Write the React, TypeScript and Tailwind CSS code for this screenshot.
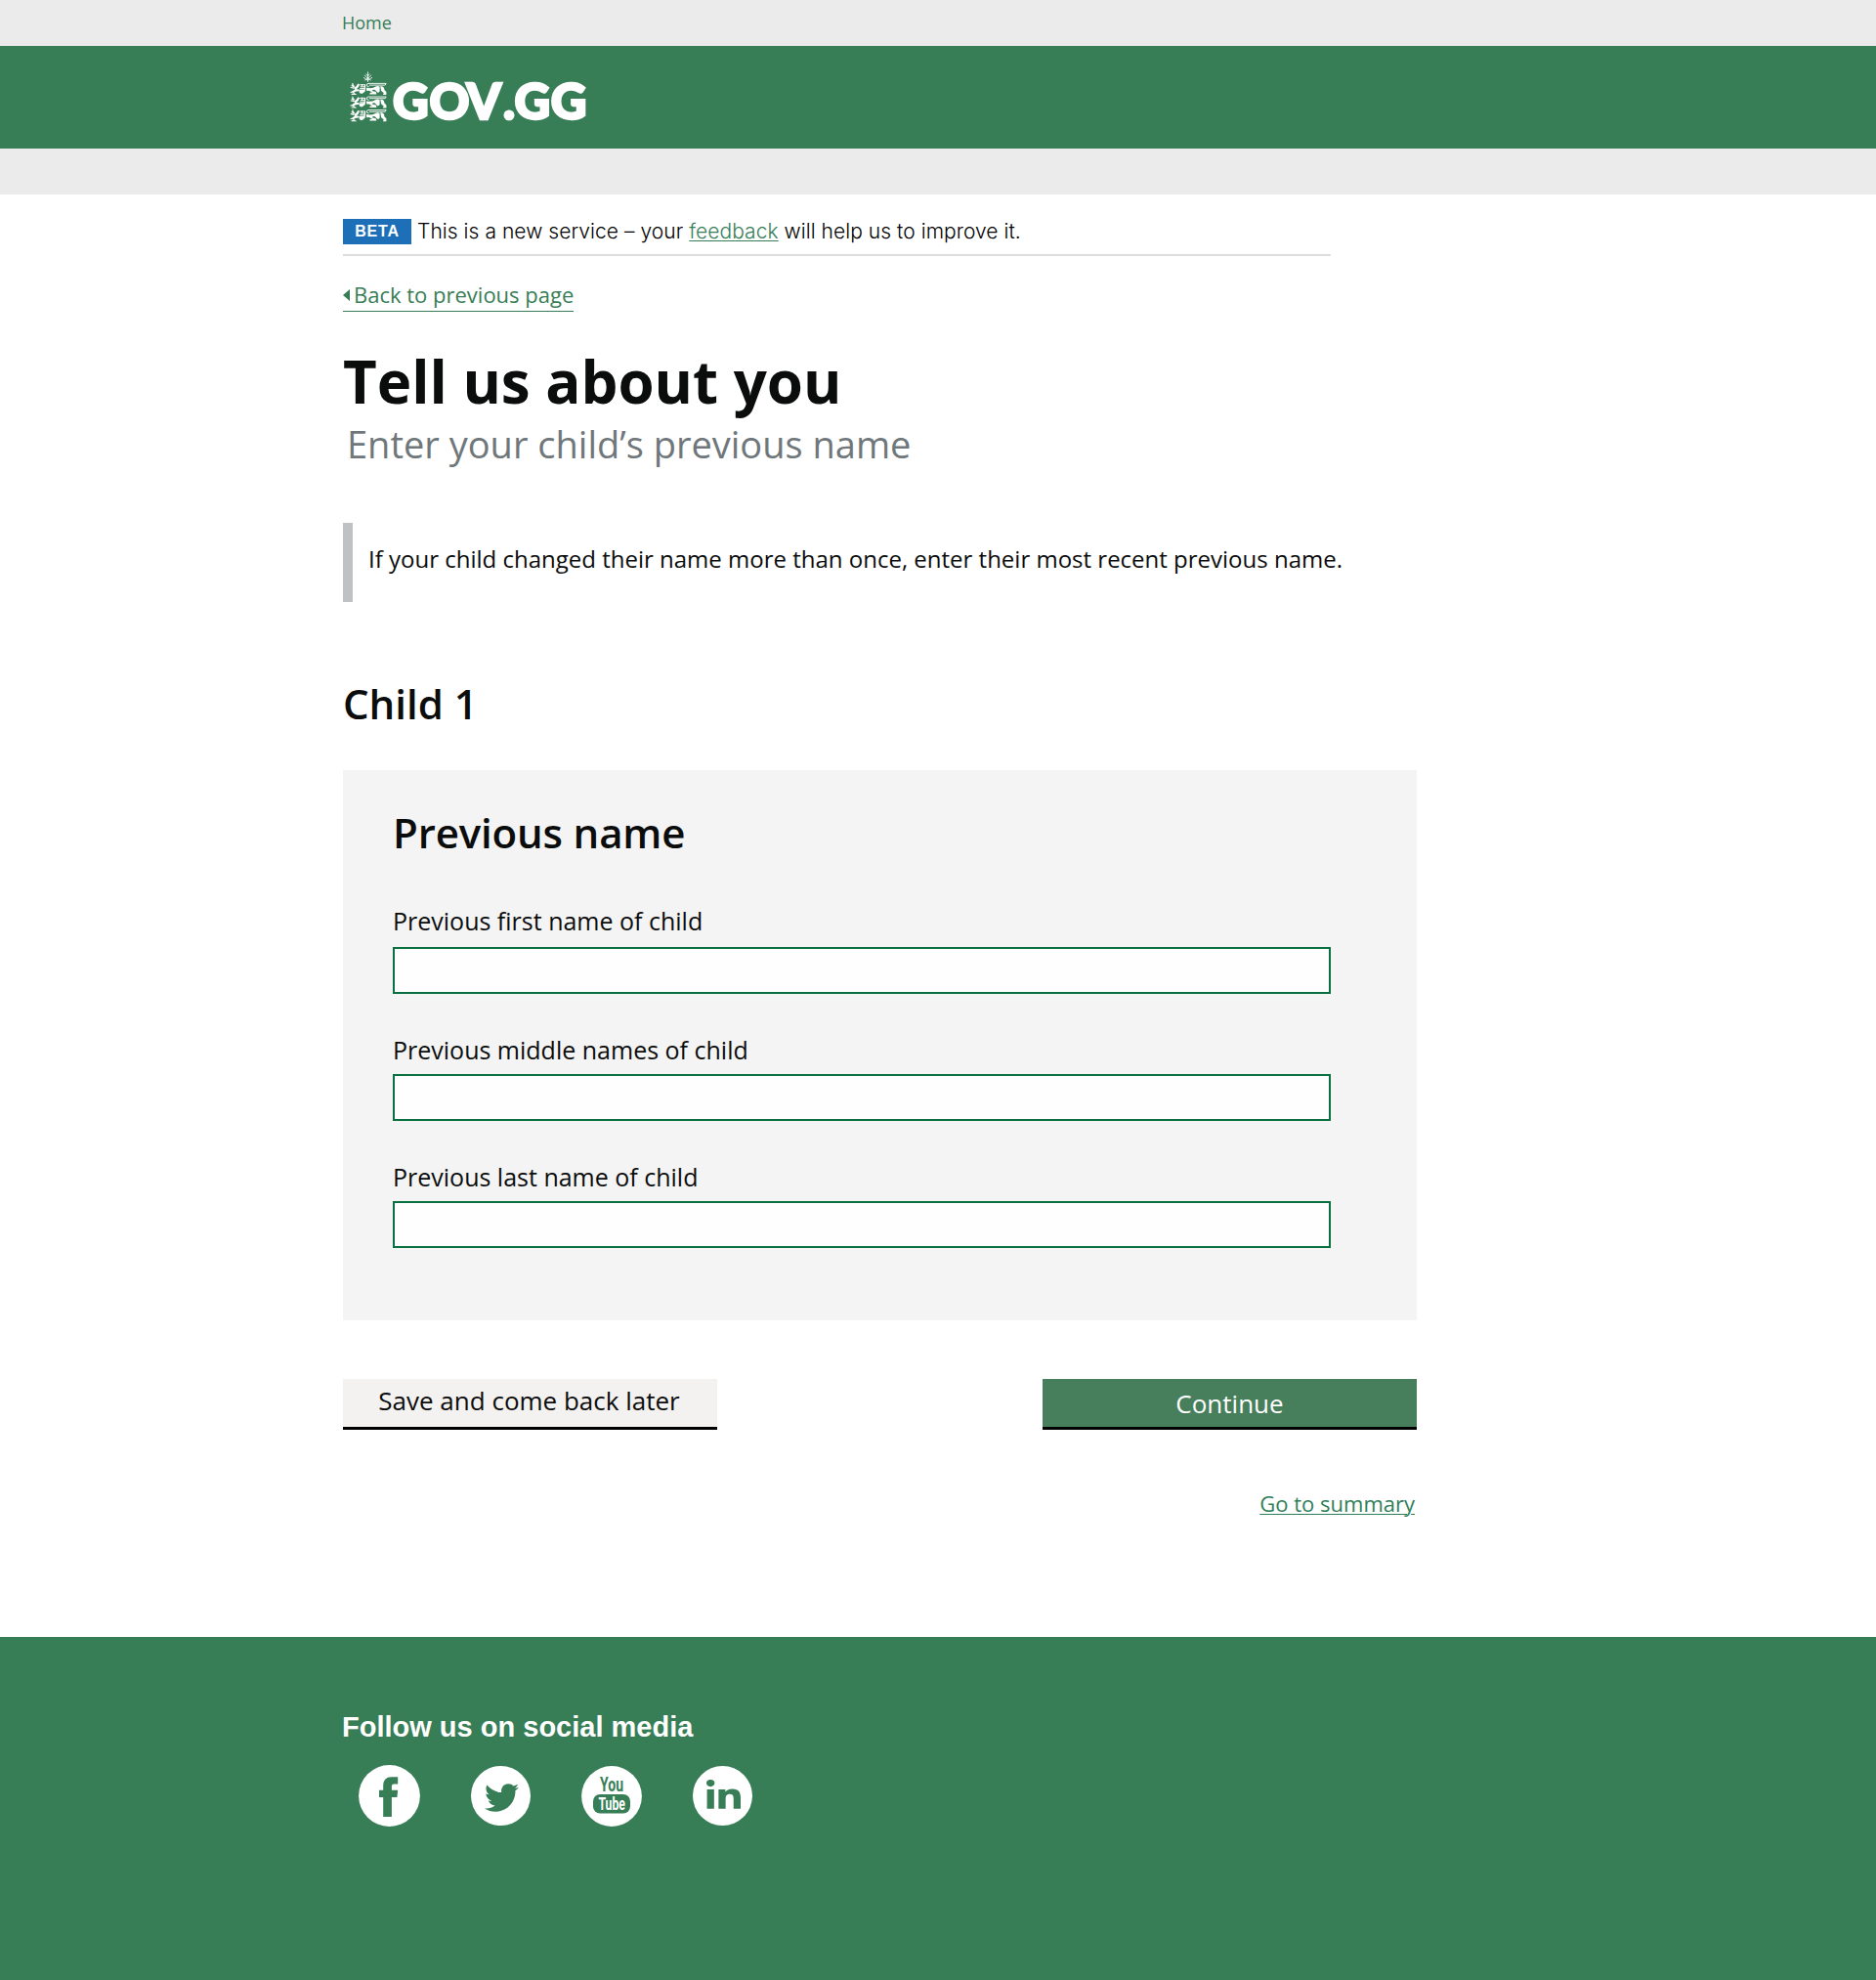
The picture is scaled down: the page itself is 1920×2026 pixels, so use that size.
import { FaLinkedinIn, FaTwitter } from "react-icons/fa";

function Lion() {
  return (
    <g>
      {/* forelegs and paws */}
      <path
        d="M2.6 0.4 Q2.4 2.6 4.6 4 M0.6 4.6 L4 5.6 M1.6 2.4 L3.6 4.4 M0.4 10 L5 8.4 M1.4 11.8 H5.4 L3.6 10.6"
        fill="none"
        stroke="white"
        strokeWidth="1.1"
      />
      <path d="M3.4 5 Q6.4 4.8 8 1 L9.8 2 Q9 5.4 6.6 6.6 L9.4 7 L9.4 8.8 Q5.6 8.2 3 11 L1.8 9.8 Q3.4 7.4 5.2 6.8 Z" fill="white" />
      {/* head and mane */}
      <path
        d="M10 2.2 h5.6 M10.6 4.2 h5.4 M10 6 h6 M12.4 1.4 v2.4 M15.4 1.8 l-0.6 7.6"
        fill="none"
        stroke="white"
        strokeWidth="1"
      />
      <path d="M9.4 7.2 L15.6 6.8 L14.4 9.8 L12 11.4 L9.6 10.4 Z" fill="white" />
      {/* tail along the top */}
      <path
        d="M19.4 4.2 L17 3.2 Q16.8 0.8 18.8 0.8 H37 L36 2.5 H19.6"
        fill="none"
        stroke="white"
        strokeWidth="0.9"
      />
      {/* body and hind legs */}
      <path
        d="M16.8 5.2 Q22 6.4 25.4 4.4 Q28.4 2.6 30.4 4 V8.6 Q30.2 10.4 28 10 L25.6 7.4 Q23.6 6.6 22.4 8.4 L26.6 9.4 L27.2 11.8 H20 L20.6 10.2 L23 10.2 L19.6 8.2 L17 8.4 Z"
        fill="white"
      />
      <path
        d="M31 3.6 Q35.2 3.2 35.2 7.4 L37.2 9.4 V12.4 H33.6 L34.6 10.6 L32 8.4 Z"
        fill="white"
      />
    </g>
  );
}

function GovLogo() {
  return (
    <svg
      width="252"
      height="76"
      viewBox="0 0 252 76"
      className="block overflow-visible"
      role="img"
      aria-label="GOV.GG"
    >
      {/* sprig above the lions */}
      <g stroke="white" strokeWidth="0.8" fill="none">
        <path d="M22.5 3.4 V13.8 M20.6 5.6 L22.5 8 L24.4 5.6 M19 6.8 L22.5 10.4 L26 6.8 M18 9.2 L22.5 12.4 L27 9.2 M19.4 12.2 L22.5 10 L25.6 12.2" />
      </g>
      <g transform="translate(4.2 14.6)">
        <Lion />
      </g>
      <g transform="translate(4.2 28.2)">
        <Lion />
      </g>
      <g transform="translate(4.2 41.8)">
        <Lion />
      </g>
      <text
        x="48 85.6 123.4 161 172.6 209.8"
        y="52.1"
        fontFamily="Lato, sans-serif"
        fontWeight="900"
        fontSize="50.5"
        fill="white"
        stroke="white"
        strokeWidth="2.6"
      >
        GOV.GG
      </text>
    </svg>
  );
}

function Field({ label, className, gap }: { label: string; className: string; gap: string }) {
  return (
    <label className={`flex flex-col ${className}`}>
      <span className="text-[25px] leading-[34px]">{label}</span>
      <input
        type="text"
        className={`${gap} h-12 w-[960px] border-2 border-[#0b703f] bg-[#fefefe] px-2 text-2xl outline-none`}
      />
    </label>
  );
}

function FacebookIcon() {
  return (
    <svg width="63" height="63" viewBox="0 0 63 63" className="block">
      <circle cx="31.5" cy="31.5" r="31.4" fill="white" />
      <path
        d="M25.2 53 V32.9 H21 V25.8 H25.2 V21.4 C25.2 15.6 28 12.2 33.6 12.2 H40.2 V19.4 H36.2 C34.4 19.4 33.9 20.4 33.9 22 V25.8 H40.2 L39.4 32.9 H33.9 V53 Z"
        fill="#377d56"
      />
    </svg>
  );
}

function YoutubeIcon() {
  return (
    <svg width="62" height="62" viewBox="0 0 62 62" className="block">
      <circle cx="31" cy="31" r="30.9" fill="white" />
      <g fontFamily="Roboto, sans-serif" fontWeight="700">
        <text x="19" y="25.6" fontSize="20" textLength="24" lengthAdjust="spacingAndGlyphs" fill="#377d56">
          You
        </text>
        <rect x="12" y="29" width="38" height="19.6" rx="7" fill="#377d56" />
        <text x="17.4" y="44.8" fontSize="18.5" textLength="27.5" lengthAdjust="spacingAndGlyphs" fill="white">
          Tube
        </text>
      </g>
    </svg>
  );
}

export default function App() {
  return (
    <div className="flex min-h-[2026px] w-[1920px] flex-col bg-white font-['Open_Sans',sans-serif] text-[#0b0c0c]">
      <nav className="h-[47px] bg-[#ebebeb] pl-[350px]">
        <a className="text-[18px] leading-[46px] text-[#377d56]">Home</a>
      </nav>
      <header className="h-[105px] bg-[#377d56] pt-[23px] pl-[354px]">
        <GovLogo />
      </header>
      <div className="h-[47px] bg-[#ebebeb]" />

      <main className="ml-[351px] flex w-[1099px] flex-col pt-[25px]">
        <div className="flex w-[1011px] items-center border-b-2 border-[#dcdddd] pb-2.5 font-['Inter','Liberation_Sans',sans-serif]">
          <strong className="flex h-[26px] w-[70px] items-center justify-center bg-[#1d70b8] font-['Liberation_Sans',sans-serif] text-[16px] font-bold tracking-[0.8px] text-white">
            BETA
          </strong>
          <p className="ml-1.5 text-[21px] leading-[26px] font-light tracking-[0.05px] whitespace-nowrap text-black">
            This is a new service – your{" "}
            <a className="text-[#377d56] underline decoration-1 underline-offset-2">feedback</a> will help us to improve
            it.
          </p>
        </div>

        <a className="mt-[24px] flex w-[236px] items-center gap-1 border-b border-[#377d56] pb-0.5 text-[22px] leading-[30px] whitespace-nowrap text-[#377d56]">
          <svg width="7" height="12" viewBox="0 0 7 12" className="mt-0.5 shrink-0">
            <path d="M7 0 V12 L0 6 Z" fill="#377d56" />
          </svg>
          Back to previous page
        </a>

        <h1 className="mt-[35px] text-[60px] leading-[72px] font-bold">Tell us about you</h1>
        <p className="mt-1 ml-1 text-[38px] leading-[48px] text-[#6f777b]">Enter your child’s previous name</p>

        <div className="mt-[57px] flex h-[81px] items-center border-l-[10px] border-[#bfc1c3] pb-2 pl-4">
          <p className="text-[24px] leading-[34px] whitespace-nowrap">
            If your child changed their name more than once, enter their most recent previous name.
          </p>
        </div>

        <h2 className="mt-[76px] text-[42px] leading-[56px] font-semibold">Child 1</h2>

        <section className="mt-10 flex h-[563px] flex-col bg-[#f4f4f4] pt-9 pl-[51px]">
          <h3 className="text-[42px] leading-[56px] font-semibold tracking-[-0.15px]">Previous name</h3>
          <Field label="Previous first name of child" className="mt-[45px]" gap="mt-2.5" />
          <Field label="Previous middle names of child" className="mt-10" gap="mt-2" />
          <Field label="Previous last name of child" className="mt-10" gap="mt-2" />
        </section>

        <div className="mt-[60px] flex justify-between">
          <button className="h-[52px] w-[383px] border-b-[3px] border-black bg-[#f3f2f1] pr-0.5 pb-[5px] text-[26px] leading-[44px]">
            Save and come back later
          </button>
          <button className="h-[52px] w-[383px] border-b-[3px] border-black bg-[#477e5b] pt-px text-[26px] leading-[48px] text-white">
            Continue
          </button>
        </div>

        <a className="mt-[60px] mr-0.5 self-end text-[22px] leading-[30px] text-[#2f8059] underline decoration-1 underline-offset-2">
          Go to summary
        </a>
      </main>

      <footer className="mt-[122px] h-[351px] bg-[#377d56] pt-[74px] pl-[350px]">
        <h2 className="font-['Liberation_Sans',sans-serif] text-[29px] leading-9 font-bold text-white">
          Follow us on social media
        </h2>
        <div className="mt-[21px] flex items-center pl-[17px]">
          <FacebookIcon />
          <span className="ml-[52px] flex size-[61px] items-center justify-center rounded-full bg-white text-[#377d56]">
            <FaTwitter size={35} className="mt-1 ml-0.5" />
          </span>
          <span className="ml-[52px]">
            <YoutubeIcon />
          </span>
          <span className="ml-[52px] flex size-[61px] items-center justify-center rounded-full bg-white text-[#377d56]">
            <FaLinkedinIn preserveAspectRatio="none" className="ml-0.5 h-[34px] w-[35px]" />
          </span>
        </div>
      </footer>
    </div>
  );
}
